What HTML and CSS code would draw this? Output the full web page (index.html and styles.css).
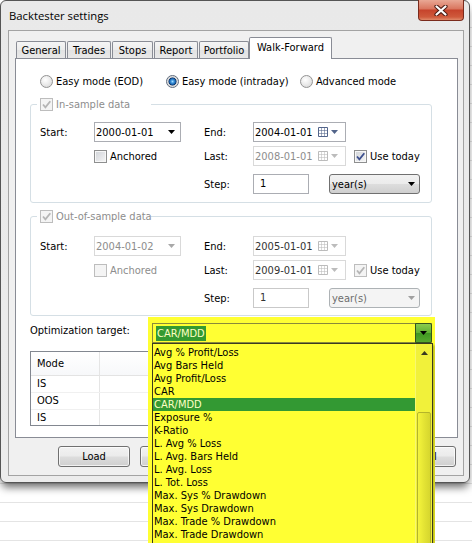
FILE: index.html
```html
<!DOCTYPE html>
<html>
<head>
<meta charset="utf-8">
<title>Backtester settings</title>
<link rel="stylesheet" href="styles.css">
</head>
<body>
<div class="window">
  <div class="titlebar">
    <span class="title">Backtester settings</span>
    <div class="close">
      <svg width="14" height="11" viewBox="0 0 14 11"><path class="x-out" d="M2.5 1.5 L11.5 9.5 M11.5 1.5 L2.5 9.5"/><path class="x-in" d="M2.5 1.5 L11.5 9.5 M11.5 1.5 L2.5 9.5"/></svg>
    </div>
  </div>
  <div class="client">
    <div class="tabs">
      <div class="tab w-general">General</div>
      <div class="tab w-trades">Trades</div>
      <div class="tab w-stops">Stops</div>
      <div class="tab w-report">Report</div>
      <div class="tab w-portfolio">Portfolio</div>
      <div class="tab active w-wf">Walk-Forward</div>
    </div>
    <div class="panel">
      <div class="modes">
        <label class="ritem m1"><span class="radio"></span>Easy mode (EOD)</label>
        <label class="ritem m2"><span class="radio on"></span>Easy mode (intraday)</label>
        <label class="ritem"><span class="radio"></span>Advanced mode</label>
      </div>

      <div class="group g-in">
        <div class="legend"><span class="check dis"><svg width="11" height="11" viewBox="0 0 11 11"><path d="M2 5.5 L4.4 8.3 L9.3 2.2"/></svg></span><span class="dim">In-sample data</span></div>
        <div class="row r1 r1-in">
          <span class="lbl c1">Start:</span>
          <div class="cb"><span>2000-01-01</span><svg class="arr" width="7" height="4" viewBox="0 0 7 4"><path d="M0 0H7L3.5 4Z"/></svg></div>
          <span class="sp"></span>
          <span class="lbl c4">End:</span>
          <div class="dt"><span>2004-01-01</span><span class="dtic"><svg class="cal" width="10" height="10" viewBox="0 0 10 10"><path class="calbox" d="M0.5 0.5H9.5V9.5H0.5Z"/><path class="calgrid" d="M0.5 3.5H9.5M0.5 6.5H9.5M3.5 0.5V9.5M6.5 0.5V9.5"/></svg><svg class="arr" width="7" height="4" viewBox="0 0 7 4"><path d="M0 0H7L3.5 4Z"/></svg></span></div>
        </div>
        <div class="row r2">
          <span class="c1"></span>
          <label class="chk c2"><span class="check"></span>Anchored</label>
          <span class="sp"></span>
          <span class="lbl c4">Last:</span>
          <div class="dt dis"><span>2008-01-01</span><span class="dtic"><svg class="cal" width="10" height="10" viewBox="0 0 10 10"><path class="calbox" d="M0.5 0.5H9.5V9.5H0.5Z"/><path class="calgrid" d="M0.5 3.5H9.5M0.5 6.5H9.5M3.5 0.5V9.5M6.5 0.5V9.5"/></svg><svg class="arr" width="7" height="4" viewBox="0 0 7 4"><path d="M0 0H7L3.5 4Z"/></svg></span></div>
          <label class="chk use"><span class="check on"><svg width="11" height="11" viewBox="0 0 11 11"><path d="M2 5.5 L4.4 8.3 L9.3 2.2"/></svg></span>Use today</label>
        </div>
        <div class="row r3">
          <span class="c123"></span>
          <span class="lbl c4">Step:</span>
          <div class="inp">1</div>
          <div class="dd"><span>year(s)</span><svg class="arr" width="7" height="4" viewBox="0 0 7 4"><path d="M0 0H7L3.5 4Z"/></svg></div>
        </div>
      </div>

      <div class="group g-out">
        <div class="legend"><span class="check dis"><svg width="11" height="11" viewBox="0 0 11 11"><path d="M2 5.5 L4.4 8.3 L9.3 2.2"/></svg></span><span class="dim">Out-of-sample data</span></div>
        <div class="row r1 r1-out">
          <span class="lbl c1">Start:</span>
          <div class="cb dis"><span>2004-01-02</span><svg class="arr" width="7" height="4" viewBox="0 0 7 4"><path d="M0 0H7L3.5 4Z"/></svg></div>
          <span class="sp"></span>
          <span class="lbl c4">End:</span>
          <div class="dt dis dark"><span>2005-01-01</span><span class="dtic"><svg class="cal" width="10" height="10" viewBox="0 0 10 10"><path class="calbox" d="M0.5 0.5H9.5V9.5H0.5Z"/><path class="calgrid" d="M0.5 3.5H9.5M0.5 6.5H9.5M3.5 0.5V9.5M6.5 0.5V9.5"/></svg><svg class="arr" width="7" height="4" viewBox="0 0 7 4"><path d="M0 0H7L3.5 4Z"/></svg></span></div>
        </div>
        <div class="row r2">
          <span class="c1"></span>
          <label class="chk c2 dim"><span class="check dis"></span>Anchored</label>
          <span class="sp"></span>
          <span class="lbl c4">Last:</span>
          <div class="dt dis dark"><span>2009-01-01</span><span class="dtic"><svg class="cal" width="10" height="10" viewBox="0 0 10 10"><path class="calbox" d="M0.5 0.5H9.5V9.5H0.5Z"/><path class="calgrid" d="M0.5 3.5H9.5M0.5 6.5H9.5M3.5 0.5V9.5M6.5 0.5V9.5"/></svg><svg class="arr" width="7" height="4" viewBox="0 0 7 4"><path d="M0 0H7L3.5 4Z"/></svg></span></div>
          <label class="chk use"><span class="check dis"><svg width="11" height="11" viewBox="0 0 11 11"><path d="M2 5.5 L4.4 8.3 L9.3 2.2"/></svg></span>Use today</label>
        </div>
        <div class="row r3">
          <span class="c123"></span>
          <span class="lbl c4">Step:</span>
          <div class="inp dis">1</div>
          <div class="dd dis"><span>year(s)</span><svg class="arr" width="7" height="4" viewBox="0 0 7 4"><path d="M0 0H7L3.5 4Z"/></svg></div>
        </div>
      </div>

      <div class="optrow">Optimization target:</div>

      <div class="tbl">
        <div class="trow thead"><div class="tc1">Mode</div><div class="tc2"></div></div>
        <div class="trow"><div class="tc1">IS</div><div class="tc2"></div></div>
        <div class="trow"><div class="tc1">OOS</div><div class="tc2"></div></div>
        <div class="trow"><div class="tc1">IS</div><div class="tc2"></div></div>
      </div>
    </div>
    <div class="buttons">
      <div class="btn">Load</div>
      <div class="btn"></div>
      <div class="btn push"></div>
      <div class="btn">Cancel</div>
    </div>
  </div>
</div>

<div class="overlay">
  <div class="ocombo">
    <span class="osel">CAR/MDD</span>
    <span class="obtn"><svg width="7" height="4" viewBox="0 0 7 4"><path d="M0 0H7L3.5 4Z"/></svg></span>
  </div>
  <div class="olist">
    <div class="oitems">
      <div class="oi">Avg % Profit/Loss</div>
      <div class="oi">Avg Bars Held</div>
      <div class="oi">Avg Profit/Loss</div>
      <div class="oi">CAR</div>
      <div class="oi hl">CAR/MDD</div>
      <div class="oi">Exposure %</div>
      <div class="oi">K-Ratio</div>
      <div class="oi">L. Avg % Loss</div>
      <div class="oi">L. Avg. Bars Held</div>
      <div class="oi">L. Avg. Loss</div>
      <div class="oi">L. Tot. Loss</div>
      <div class="oi">Max. Sys % Drawdown</div>
      <div class="oi">Max. Sys Drawdown</div>
      <div class="oi">Max. Trade % Drawdown</div>
      <div class="oi">Max. Trade Drawdown</div>
    </div>
    <div class="oscroll">
      <div class="oup"><svg width="7" height="4" viewBox="0 0 7 4"><path d="M0 4H7L3.5 0Z"/></svg></div>
      <div class="othumb"></div>
    </div>
  </div>
</div>
</body>
</html>
```

FILE: styles.css
```css
* { box-sizing: border-box; }
html, body { margin: 0; padding: 0; }
body {
  width: 472px;
  height: 543px;
  overflow: hidden;
  position: relative;
  background-color: #fff;
  background-image: repeating-linear-gradient(to bottom, transparent 0, transparent 18px, #e4e4e4 18px, #e4e4e4 19px);
  background-position: 0 9px;
  font-family: "DejaVu Sans Condensed", "DejaVu Sans", sans-serif;
  font-size: 11px;
  color: #000;
}
label { cursor: default; }

/* window */
.window {
  width: 470px;
  height: 483px;
  border: 1px solid #555;
  border-radius: 6px;
  background: linear-gradient(#e9e9e9, #ececec);
  box-shadow: 0 6px 8px -2px rgba(0,0,0,.6);
  display: flex;
  flex-direction: column;
}
.titlebar { height: 29px; display: flex; flex: none; }
.title {
  margin: 7px 0 0 8px;
  font-family: "Open Sans", "Noto Sans", sans-serif;
  font-size: 11.3px;
  line-height: 16px;
  color: #000;
}
.close {
  margin: -1px 5px 0 auto;
  width: 46px;
  height: 21px;
  border: 1px solid #7a2a1c;
  border-top: none;
  border-radius: 0 0 4px 4px;
  background: linear-gradient(#e9a895 0%, #d9755e 45%, #c6432b 50%, #cf5a3c 85%, #e08a6a 100%);
  display: flex;
  align-items: center;
  justify-content: center;
}
.x-out { stroke: #4a1a12; stroke-width: 4.2; fill: none; stroke-linecap: round; }
.x-in { stroke: #fff; stroke-width: 2.2; fill: none; stroke-linecap: round; }

.client {
  margin: 0 5px 0 7px;
  width: 456px;
  height: 446px;
  border: 1px solid #a3a3a3;
  background: #f0f0f0;
  padding-top: 7px;
  flex: none;
}

/* tabs */
.tabs {
  display: flex;
  align-items: flex-end;
  height: 20px;
  padding-left: 7px;
  position: relative;
  z-index: 2;
}
.tab {
  height: 17px;
  border: 1px solid #898c95;
  border-bottom: none;
  border-radius: 2px 2px 0 0;
  background: linear-gradient(#f5f5f5 0%, #ececec 50%, #e2e2e2 51%, #e8e8e8 100%);
  margin-right: 1px;
  display: flex;
  align-items: center;
  justify-content: center;
  padding-top: 1px;
  flex: none;
}
.tab.active {
  height: 22px;
  margin-bottom: -1px;
  background: #fff;
  padding-top: 0;
  padding-bottom: 3px;
}
.w-general { width: 50px; }
.w-trades { width: 44px; }
.w-stops { width: 41px; }
.w-report { width: 44px; }
.w-portfolio { width: 50px; margin-right: 0; }
.w-wf { width: 83px; }

.panel {
  margin-left: 6px;
  width: 443px;
  height: 380px;
  border: 1px solid #898c95;
  background: #fff;
  padding-top: 15px;
  position: relative;
  z-index: 1;
}

/* radios */
.modes { display: flex; align-items: center; height: 14px; padding-left: 24px; }
.ritem { display: flex; align-items: center; gap: 3px; white-space: nowrap; }
.m1 { width: 126px; }
.m2 { width: 134px; }
.radio {
  width: 13px;
  height: 13px;
  border-radius: 50%;
  border: 1px solid #939393;
  background: radial-gradient(circle at 40% 35%, #ffffff 0, #ececec 45%, #d2d2d2 100%);
  flex: none;
}
.radio.on {
  border-color: #5f6b7c;
  background: radial-gradient(circle at 50% 50%, #a4dbff 0, #3b95dd 1.6px, #1a5fa8 3px, #0c3468 3.7px, #d4d4d4 4.3px, #efefef 6px);
}

/* checkboxes */
.check {
  width: 13px;
  height: 13px;
  border: 1px solid #8e8f8f;
  background: linear-gradient(135deg, #d0d3d8 0%, #f6f6f6 100%);
  box-shadow: inset 0 0 0 1px #f7f7f7;
  flex: none;
  display: flex;
  align-items: center;
  justify-content: center;
}
.check svg path { fill: none; stroke: #3c4f8e; stroke-width: 1.8; }
.check.dis { border-color: #bdbdbd; background: #f4f4f4; box-shadow: none; }
.check.dis svg path { stroke: #b5b5b5; }
.chk { display: flex; align-items: center; gap: 3px; white-space: nowrap; }
.dim { color: #8d8d8d; }

/* groups */
.group {
  margin-left: 14px;
  width: 402px;
  border: 1px solid #d5dfe5;
  border-radius: 3px;
}
.g-in { margin-top: 16px; height: 99px; }
.g-out { margin-top: 13px; height: 100px; }
.legend {
  display: flex;
  align-items: center;
  gap: 3px;
  height: 15px;
  margin: -8px 0 0 6px;
  width: 114px;
  background: #fff;
  padding-left: 3px;
  white-space: nowrap;
}
.row { display: flex; align-items: center; height: 20px; padding-left: 9px; }
.r1-in { margin-top: 10px; }
.r1-out { margin-top: 12px; }
.r2 { margin-top: 4px; }
.r3 { margin-top: 8px; }
.c1 { width: 54px; flex: none; }
.c2 { width: 87px; flex: none; }
.sp { width: 23px; flex: none; }
.c123 { width: 164px; flex: none; }
.c4 { width: 49px; flex: none; }
.use { margin-left: 8px; }

.arr path { fill: currentColor; }

.cb {
  width: 87px;
  height: 20px;
  border: 1px solid #abadb3;
  background: #fff;
  display: flex;
  align-items: center;
  justify-content: space-between;
  padding: 0 5px 0 1px;
  flex: none;
  color: #000;
}
.cb .arr { color: #000; }
.cb.dis { border-color: #d9d9d9; color: #8d8d8d; }
.cb.dis .arr { color: #a8a8a8; }

.dt {
  width: 93px;
  height: 20px;
  border: 1px solid #abadb3;
  background: #fff;
  display: flex;
  align-items: center;
  padding: 0 7px 0 1px;
  flex: none;
  color: #000;
}
.dtic { margin-left: auto; display: flex; align-items: center; gap: 3px; color: #52648a; }
.cal .calbox { fill: #fff; stroke: currentColor; }
.cal .calgrid { fill: none; stroke: currentColor; opacity: .55; }
.dt.dis { border-color: #d9d9d9; color: #8d8d8d; }
.dt.dis .dtic { color: #bcbcbc; }
.dt.dark { color: #333; }

.inp {
  width: 56px;
  height: 20px;
  border: 1px solid #abadb3;
  background: #fff;
  padding-left: 6px;
  line-height: 18px;
  flex: none;
}
.inp.dis { border-color: #c9c9c9; color: #333; }

.dd {
  margin-left: 20px;
  width: 91px;
  height: 20px;
  border: 1px solid #707070;
  border-radius: 3px;
  background: linear-gradient(#f2f2f2 0%, #ebebeb 50%, #dddddd 51%, #cfcfcf 100%);
  display: flex;
  align-items: center;
  justify-content: space-between;
  padding: 0 4px 0 2px;
  flex: none;
}
.dd .arr { color: #000; }
.dd.dis { border-color: #adb2b5; background: #f4f4f4; color: #6d6d6d; }
.dd.dis .arr { color: #a0a0a0; }

.optrow { margin: 5px 0 0 14px; height: 20px; line-height: 20px; }

/* table */
.tbl {
  margin: 10px 0 0 14px;
  width: 402px;
  height: 75px;
  border: 1px solid #828790;
  overflow: hidden;
  background: #fff;
}
.trow { display: flex; height: 17px; border-bottom: 1px solid #f0f0f0; line-height: 16px; }
.thead {
  height: 24px;
  line-height: 23px;
  border-bottom: 1px solid #e3e3e3;
  background: linear-gradient(#ffffff, #f7f8fa);
}
.tc1 { width: 69px; padding-left: 6px; border-right: 1px solid #e5e5e5; flex: none; }
.tc2 { flex: 1; padding-left: 45px; }

/* buttons */
.buttons { display: flex; margin-top: 8px; padding: 0 7px 0 49px; gap: 10px; }
.btn {
  width: 72px;
  height: 21px;
  border: 1px solid #707070;
  border-radius: 3px;
  background: linear-gradient(#f2f2f2 0%, #ebebeb 48%, #dddddd 52%, #cfcfcf 100%);
  box-shadow: inset 0 0 0 1px rgba(255,255,255,.7);
  display: flex;
  align-items: center;
  justify-content: center;
  flex: none;
}
.push { margin-left: auto; }

/* highlighted dropdown overlay */
.overlay {
  position: absolute;
  left: 148px;
  top: 317px;
  width: 287px;
  height: 226px;
  background: #ffff33;
  overflow: hidden;
  z-index: 10;
}
.ocombo {
  margin: 6px 0 0 4px;
  width: 280px;
  height: 20px;
  border: 1px solid #8a8a3a;
  display: flex;
  align-items: center;
  padding-left: 3px;
}
.osel {
  background: #349a30;
  color: #ffffc4;
  height: 15px;
  line-height: 15px;
  padding: 0 1px;
}
.obtn {
  margin-left: auto;
  margin-right: -1px;
  width: 17px;
  height: 20px;
  border: 1px solid #35551e;
  border-radius: 0 2px 2px 0;
  background: linear-gradient(#8ccc4c 0%, #5fb034 50%, #3f9622 51%, #56a82e 100%);
  display: flex;
  align-items: center;
  justify-content: center;
}
.obtn path { fill: #000; }
.olist {
  margin-left: 4px;
  width: 281px;
  height: 210px;
  border: 1px solid #3a3a20;
  display: flex;
  padding-top: 2px;
  box-shadow: 2px 2px 2px rgba(120,120,0,.45);
}
.oitems { flex: 1; }
.oi { height: 13px; line-height: 13px; padding-left: 1px; white-space: nowrap; }
.oi.hl { background: #339933; color: #ffffc4; }
.oscroll {
  width: 17px;
  flex: none;
  margin-top: -2px;
  background: #f1f13a;
  border-left: 1px solid #f8f870;
}
.oup { height: 17px; display: flex; align-items: center; justify-content: center; }
.oup path { fill: #3a3a20; }
.othumb {
  margin: 51px 0 0 1px;
  width: 14px;
  height: 200px;
  border: 1px solid #b4b42a;
  border-radius: 2px;
  background: linear-gradient(to right, #f4f43c 0%, #e4e434 50%, #d6d62e 100%);
}
```
